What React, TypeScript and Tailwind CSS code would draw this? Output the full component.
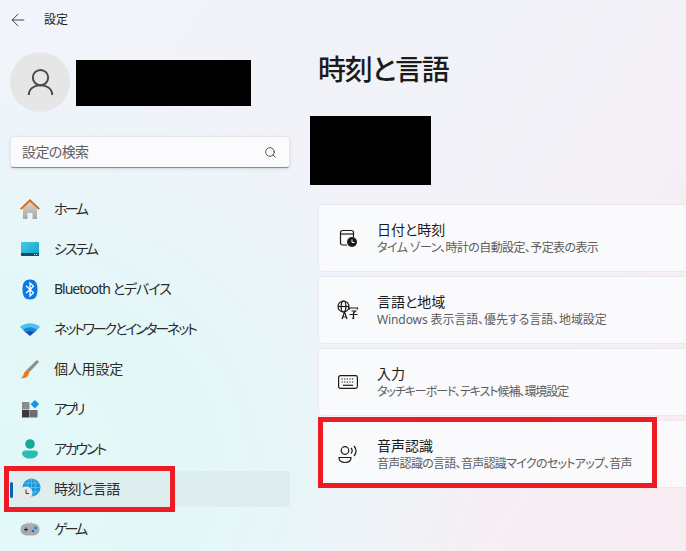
import { ArrowLeft, Search } from 'lucide-react';
import type { ReactNode } from 'react';

const font = "font-['Noto_Sans','Noto_Sans_CJK_JP',sans-serif]";

function HomeIcon() {
  return (
    <svg width="22" height="22" viewBox="0 0 22 22">
      <defs>
        <linearGradient id="homeWall" x1="0" y1="0" x2="0" y2="1">
          <stop offset="0" stopColor="#d8d4d0" />
          <stop offset="1" stopColor="#a9a5a3" />
        </linearGradient>
      </defs>
      <path d="M4 10 11 3.500 18 10V21H13.500V15H8.500V21H4Z" fill="url(#homeWall)" />
      <path d="M1 10.500 11 1l10 9.500-1.400 1.300L11 3.700 2.400 11.800Z" fill="#e06a12" />
    </svg>
  );
}

function SystemIcon() {
  return (
    <svg width="20" height="16" viewBox="0 0 20 16">
      <defs>
        <linearGradient id="sysScreen" x1="0" y1="0" x2="1" y2="1">
          <stop offset="0" stopColor="#3fd0e6" />
          <stop offset="1" stopColor="#129bc9" />
        </linearGradient>
      </defs>
      <rect x="1" y="1" width="18" height="14" rx="1" fill="url(#sysScreen)" />
      <path d="M1 12h18v2a1 1 0 0 1-1 1H2a1 1 0 0 1-1-1Z" fill="#0f4a68" />
      <rect x="14" y="13" width="1.200" height="1" fill="#bfe6f2" />
      <rect x="16" y="13" width="1.200" height="1" fill="#bfe6f2" />
    </svg>
  );
}

function BluetoothIcon() {
  return (
    <svg width="16" height="21" viewBox="0 0 16 21">
      <path d="M8 0.500C13 0.500 15.500 3.500 15.500 10.500S13 20.500 8 20.500 0.500 17.500 0.500 10.500 3 0.500 8 0.500Z" fill="#0a78e6" />
      <path d="M4 6.800 11.500 13.800 8 17V4L11.500 7.200 4 14.200" fill="none" stroke="#fff" strokeWidth="1.300" />
    </svg>
  );
}

function WifiIcon() {
  return (
    <svg width="20" height="14" viewBox="0 0 20 14">
      <path d="M0 5C5.500 0 14.500 0 20 5L17 8H3Z" fill="#4cc2ee" />
      <path d="M3 8C7 4.400 13 4.400 17 8L14 11H6Z" fill="#1a86dc" />
      <path d="M6 10.500C8.400 8.700 11.600 8.700 14 10.500L10 14Z" fill="#0b4fa8" />
    </svg>
  );
}

function BrushIcon() {
  return (
    <svg width="20" height="20" viewBox="0 0 20 20">
      <path d="M17 1 19 3 9.500 13 7 10.500Z" fill="#8d8d8d" />
      <path d="M7 10.500 9.500 13 8 17C6 19 3 19.500 1 19 3 18 3.500 16 4 14Z" fill="#e9791c" />
    </svg>
  );
}

function AppsIcon() {
  return (
    <svg width="18" height="18" viewBox="0 0 18 18">
      <rect x="1" y="2" width="7.500" height="7.500" fill="#8c8c8c" />
      <rect x="1" y="10" width="7.500" height="7.500" fill="#3a3a3a" />
      <rect x="9" y="10" width="7.500" height="7.500" fill="#6e6e6e" />
      <rect x="10.500" y="1" width="6" height="6" transform="rotate(45 13.500 4.500)" fill="#1e90e6" />
    </svg>
  );
}

function AccountIcon() {
  return (
    <svg width="18" height="20" viewBox="0 0 18 20">
      <circle cx="9" cy="5" r="4.800" fill="#17a899" />
      <path d="M1 14a3 3 0 0 1 3-2.500h10a3 3 0 0 1 3 2.500c0 3.500-3.500 5.500-8 5.500S1 17.500 1 14Z" fill="#27c0ae" />
    </svg>
  );
}

function TimeLanguageIcon() {
  return (
    <svg width="22" height="22" viewBox="0 0 22 22">
      <circle cx="12.500" cy="9.500" r="9" fill="#1f97d8" />
      <path d="M12.500 0.500V18.500M3.500 9.500H21.500M5 5H20M5 14H20" stroke="#6ed0ee" strokeWidth="0.600" fill="none" />
      <ellipse cx="12.500" cy="9.500" rx="4" ry="9" stroke="#6ed0ee" strokeWidth="0.600" fill="none" />
      <circle cx="7" cy="15" r="6.500" fill="#e8e8e8" />
      <path d="M7 11.500V15.500H10" stroke="#333" strokeWidth="1" fill="none" />
    </svg>
  );
}

function GameIcon() {
  return (
    <svg width="20" height="14" viewBox="0 0 20 14">
      <rect x="0.500" y="1.500" width="19" height="12" rx="6" fill="#a8acb0" />
      <path d="M4 7.500h4M6 5.500v4" stroke="#2b2b2b" strokeWidth="1" />
      <circle cx="13" cy="9" r="1.300" fill="#1673c8" />
      <circle cx="15.500" cy="6" r="1.300" fill="#1673c8" />
      <circle cx="8" cy="0.800" r="0.500" fill="#777" />
      <circle cx="11" cy="0.800" r="0.500" fill="#777" />
    </svg>
  );
}

function DateTimeIcon() {
  return (
    <svg width="20" height="20" viewBox="0 0 20 20" fill="none" stroke="#1b1b1b" strokeWidth="1.200">
      <path d="M9 17H4.500A2 2 0 0 1 2.500 15V4.500A2 2 0 0 1 4.500 2.500H13.500A2 2 0 0 1 15.500 4.500V9" />
      <path d="M2.500 6H15.500" />
      <circle cx="14" cy="14" r="5" fill="#1b1b1b" stroke="none" />
      <path d="M14 11.500V14.500H16.500" stroke="#fff" strokeWidth="1" />
    </svg>
  );
}

function LanguageIcon() {
  return (
    <svg width="22" height="20" viewBox="0 0 22 20" fill="none" stroke="#1b1b1b" strokeWidth="1.200">
      <circle cx="6.500" cy="6.500" r="5.500" />
      <ellipse cx="6.500" cy="6.500" rx="2.400" ry="5.500" />
      <path d="M1 6.500H12" />
      <path d="M5 19 7.500 12 10 19M5.800 17H9.200" />
      <path d="M12.500 9.500V8H20.500V9.500M14.500 11H18.500L16.500 13V18.500L15 18M12.500 14.500H20.500" />
    </svg>
  );
}

function KeyboardIcon() {
  return (
    <svg width="20" height="14" viewBox="0 0 20 14" fill="none">
      <rect x="0.600" y="0.600" width="18.800" height="12.800" rx="1.800" stroke="#1b1b1b" strokeWidth="1.200" />
      <path d="M3.500 4H16.500M3.500 7H16.500" stroke="#1b1b1b" strokeWidth="1.200" strokeDasharray="1.300 1.300" />
      <path d="M5 10.300H15" stroke="#1b1b1b" strokeWidth="1.200" />
    </svg>
  );
}

function SpeechIcon() {
  return (
    <svg width="20" height="20" viewBox="0 0 20 20" fill="none" stroke="#1b1b1b" strokeWidth="1.200">
      <circle cx="7" cy="6.500" r="3.800" />
      <path d="M1 13.500H13C13 17 10.500 18.500 7 18.500S1 17 1 13.500Z" />
      <path d="M13 4C14.300 5.500 14.300 8 13 9.500M16 2C18.500 5 18.500 9 16 12" />
    </svg>
  );
}

const navItems: { label: string; icon: ReactNode; track: string; active?: boolean }[] = [
  { label: 'ホーム', icon: <HomeIcon />, track: 'tracking-[-2.6px]' },
  { label: 'システム', icon: <SystemIcon />, track: 'tracking-[-2px]' },
  { label: 'Bluetooth とデバイス', icon: <BluetoothIcon />, track: 'tracking-[-1px]' },
  { label: 'ネットワークとインターネット', icon: <WifiIcon />, track: 'tracking-[-2.2px]' },
  { label: '個人用設定', icon: <BrushIcon />, track: 'tracking-[-0.2px]' },
  { label: 'アプリ', icon: <AppsIcon />, track: 'tracking-[-3px]' },
  { label: 'アカウント', icon: <AccountIcon />, track: 'tracking-[-2.2px]' },
  { label: '時刻と言語', icon: <TimeLanguageIcon />, track: 'tracking-[-0.5px]', active: true },
  { label: 'ゲーム', icon: <GameIcon />, track: 'tracking-[-3px]' },
];

const cards = [
  { title: '日付と時刻', sub: 'タイム ゾーン、時計の自動設定、予定表の表示', track: 'tracking-[-0.6px]', icon: <DateTimeIcon /> },
  { title: '言語と地域', sub: 'Windows 表示言語、優先する言語、地域設定', track: 'tracking-[-0.1px]', icon: <LanguageIcon /> },
  { title: '入力', sub: 'タッチキーボード、テキスト候補、環境設定', track: 'tracking-[-1.05px]', icon: <KeyboardIcon /> },
  { title: '音声認識', sub: '音声認識の言語、音声認識マイクのセットアップ、音声', track: 'tracking-[-0.7px]', icon: <SpeechIcon /> },
];

export default function App() {
  return (
    <div
      className={`relative flex h-[551px] w-[686px] overflow-hidden bg-[linear-gradient(125deg,#f1f5fb_0%,#f1f2f8_35%,#f2f2f8_55%,#f8ecf1_100%)] text-[#1b1b1b] [font-feature-settings:'palt'] ${font}`}
    >
      {/* teal glow from the bottom left */}
      <div className="pointer-events-none absolute inset-0 bg-[radial-gradient(ellipse_480px_420px_at_0%_85%,#e2f8f7_0%,#e4f7f8_45%,transparent_100%)]" />

      <aside className="relative flex w-[300px] shrink-0 flex-col px-2.5">
        <div className="flex h-[38px] items-center pt-px">
          <ArrowLeft size={20} strokeWidth={1} className="-ml-0.5 text-[#222]" />
          <span className="ml-4 text-xs">設定</span>
        </div>
        <div className="mt-3.5 flex items-center gap-1.5">
          <div className="flex h-[60px] w-[60px] items-center justify-center rounded-full bg-[#e6e6e6]">
            <svg width="27" height="29" viewBox="0 0 30 32" fill="none" stroke="#4a4a4a" strokeWidth="2.200">
              <circle cx="15" cy="10.500" r="8.500" />
              <path d="M2 30C2 23 8 19 15 19S28 23 28 30" />
            </svg>
          </div>
          <div className="mt-0.5 h-[46px] w-[175px] bg-black" />
        </div>
        <div className="mt-6 flex h-8 w-[280px] items-center justify-between rounded border border-[#e6e6ea] border-b-[#8c8c8c] bg-[#fbfbfe] pl-[11px] pr-3 shadow-sm">
          <span className="text-sm tracking-[-0.6px] text-[#5f5f5f]">設定の検索</span>
          <Search size={13} strokeWidth={1.5} className="text-[#333]" />
        </div>
        <nav className="mt-[23px] flex flex-col gap-1">
          {navItems.map((item) => (
            <div
              key={item.label}
              className={`relative flex h-9 items-center rounded ${item.active ? 'bg-[#deeeee]' : ''}`}
            >
              {item.active && <div className="absolute left-0 top-[11px] h-4 w-[3px] rounded bg-[#0067c0]" />}
              <div className="flex w-11 shrink-0 items-center justify-center pr-1">{item.icon}</div>
              <span className={`text-sm text-[#2b2b2b] ${item.track}`}>{item.label}</span>
            </div>
          ))}
        </nav>
      </aside>

      <main className="relative min-w-0 flex-1 pl-[18px]">
        <h1 className="mt-[49px] text-[28px] leading-10 font-medium tracking-[-1.2px]">時刻と言語</h1>
        <div className="-ml-2 mt-[27px] h-[69px] w-[121px] bg-black" />
        <div className="mt-[19px] flex w-[400px] flex-col gap-1">
          {cards.map((card) => (
            <div
              key={card.title}
              className="flex h-[68px] items-center rounded border border-[#ebe9ee] bg-[#fbfbfd]/80"
            >
              <div className="flex w-[58px] shrink-0 items-center justify-center">{card.icon}</div>
              <div className="flex flex-col">
                <span className="text-sm leading-5">{card.title}</span>
                <span className={`text-xs leading-4 text-[#5d5d5d] ${card.track}`}>{card.sub}</span>
              </div>
            </div>
          ))}
        </div>
      </main>

      {/* red annotation boxes */}
      <div className="absolute left-[4px] top-[466px] h-[46px] w-[171px] border-[5px] border-[#ed1c24]" />
      <div className="absolute left-[318px] top-[417px] h-[71px] w-[339px] border-[5px] border-[#ed1c24]" />
    </div>
  );
}
